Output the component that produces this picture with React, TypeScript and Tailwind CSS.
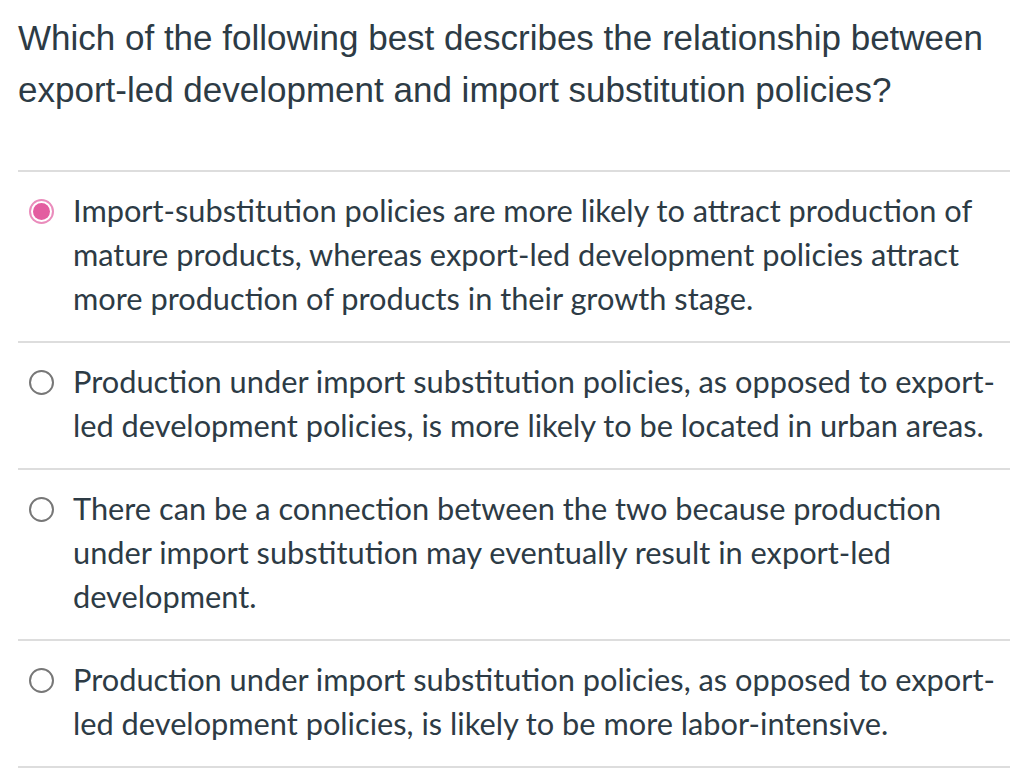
import React from "react";

type Option = {
  text: string;
  selected?: boolean;
};

const options: Option[] = [
  {
    text: "Import-substitution policies are more likely to attract production of mature products, whereas export-led development policies attract more production of products in their growth stage.",
    selected: true,
  },
  {
    text: "Production under import substitution policies, as opposed to export-led development policies, is more likely to be located in urban areas.",
  },
  {
    text: "There can be a connection between the two because production under import substitution may eventually result in export-led development.",
  },
  {
    text: "Production under import substitution policies, as opposed to export-led development policies, is likely to be more labor-intensive.",
  },
];

const Radio = ({ selected }: { selected?: boolean }) =>
  selected ? (
    <span className="flex h-[25px] w-[25px] shrink-0 items-center justify-center rounded-full bg-[#ea8cbc]">
      <span className="flex h-[21px] w-[21px] items-center justify-center rounded-full bg-white">
        <span className="h-[17px] w-[17px] rounded-full bg-[#e35da0]" />
      </span>
    </span>
  ) : (
    <span className="h-[25px] w-[25px] shrink-0 rounded-full border-2 border-[#777777] bg-white" />
  );

export default function App() {
  return (
    <div className="min-h-screen bg-white pl-[18px] pr-[14px] text-[#2d3b45]">
      <h1 className="pt-[12px] pr-[20px] font-['Liberation_Sans',Arial,sans-serif] text-[35px] leading-[52px] font-normal">
        Which of the following best describes the relationship between
        export-led development and import substitution policies?
      </h1>
      <div className="mt-[54px] border-t-2 border-[#dddddd]">
        {options.map((o, i) => (
          <label
            key={i}
            className="flex gap-[19px] border-b-2 border-[#dddddd] pt-[17px] pb-[20px] pl-[11px] font-['Lato',sans-serif] text-[30.75px] leading-[44px]"
          >
            <span className="flex h-[44px] items-center">
              <Radio selected={o.selected} />
            </span>
            <span>{o.text}</span>
          </label>
        ))}
      </div>
    </div>
  );
}
